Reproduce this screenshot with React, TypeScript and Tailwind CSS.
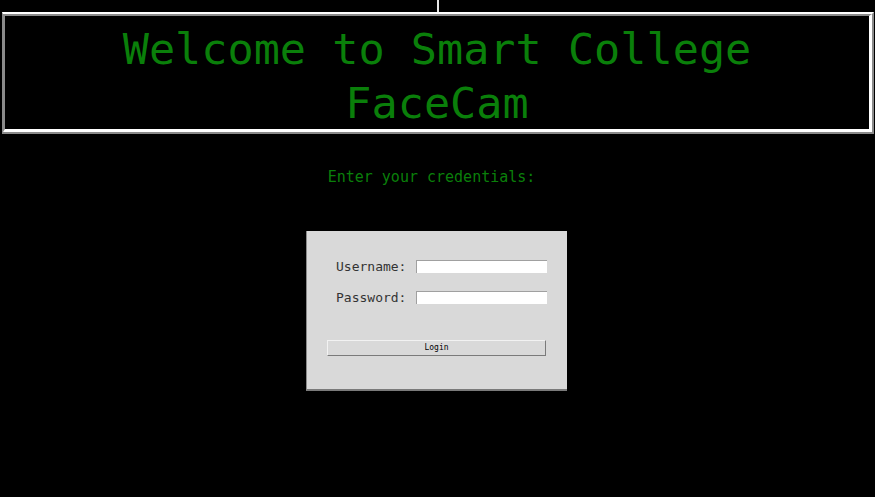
export default function App() {
  return (
    <div className="w-full h-[497px] bg-black flex flex-col overflow-hidden font-['DejaVu_Sans_Mono',monospace]">
      {/* top strip */}
      <div className="flex h-[12px]">
        <div className="flex-1 bg-black" />
        <div className="w-[2px] bg-[#e6e6e6]" />
        <div className="flex-1 bg-black" />
      </div>

      {/* header frame */}
      <div className="ml-[2px] mr-[1px] h-[122px] flex border-t-2 border-l-[1px] border-r-2 border-b-2 border-t-white border-l-[#8a8a8a] border-r-[#8a8a8a] border-b-[#8a8a8a]">
        <div className="flex-1 flex flex-col items-center pt-[6px] bg-black border-t-[2px] border-l-[2px] border-r-[3px] border-b-[3px] border-t-[#8a8a8a] border-l-[#8a8a8a] border-r-white border-b-white">
          <div className="text-[43.5px] leading-[54px] text-[#0a7f0a]">Welcome to Smart College</div>
          <div className="text-[43.5px] leading-[54px] text-[#0a7f0a]">FaceCam</div>
        </div>
      </div>

      {/* credentials */}
      <div className="mt-[34px] pr-[12px] text-center text-[15px] leading-[18px] text-[#0a7f0a]">Enter your credentials:</div>

      <div className="mt-[45px] flex justify-center pr-[2px]">
        <div className="w-[261px] h-[160px] bg-[#d9d9d9] border-l border-b-2 border-l-[#8a8a8a] border-b-[#7a7a7a] flex flex-col pt-[29px]">
          <div className="flex flex-col gap-[18px] pl-[29px]">
            <div className="flex items-center h-[13px]">
              <span className="w-[80px] text-[13px] leading-[13px] text-[#333]">Username:</span>
              <input className="w-[131px] h-[13px] bg-white border-t border-l border-t-[#a0a0a0] border-l-[#a0a0a0] outline-none" />
            </div>
            <div className="flex items-center h-[13px]">
              <span className="w-[80px] text-[13px] leading-[13px] text-[#333]">Password:</span>
              <input type="password" className="w-[131px] h-[13px] bg-white border-t border-l border-t-[#a0a0a0] border-l-[#a0a0a0] outline-none" />
            </div>
          </div>
          <button className="mt-[36px] ml-[20px] mr-[21px] h-[16px] bg-[#d9d9d9] border border-t-[#f2f2f2] border-l-[#f2f2f2] border-r-[#7a7a7a] border-b-[#7a7a7a] text-[8px] leading-[14px] text-black">
            Login
          </button>
        </div>
      </div>
    </div>
  )
}
